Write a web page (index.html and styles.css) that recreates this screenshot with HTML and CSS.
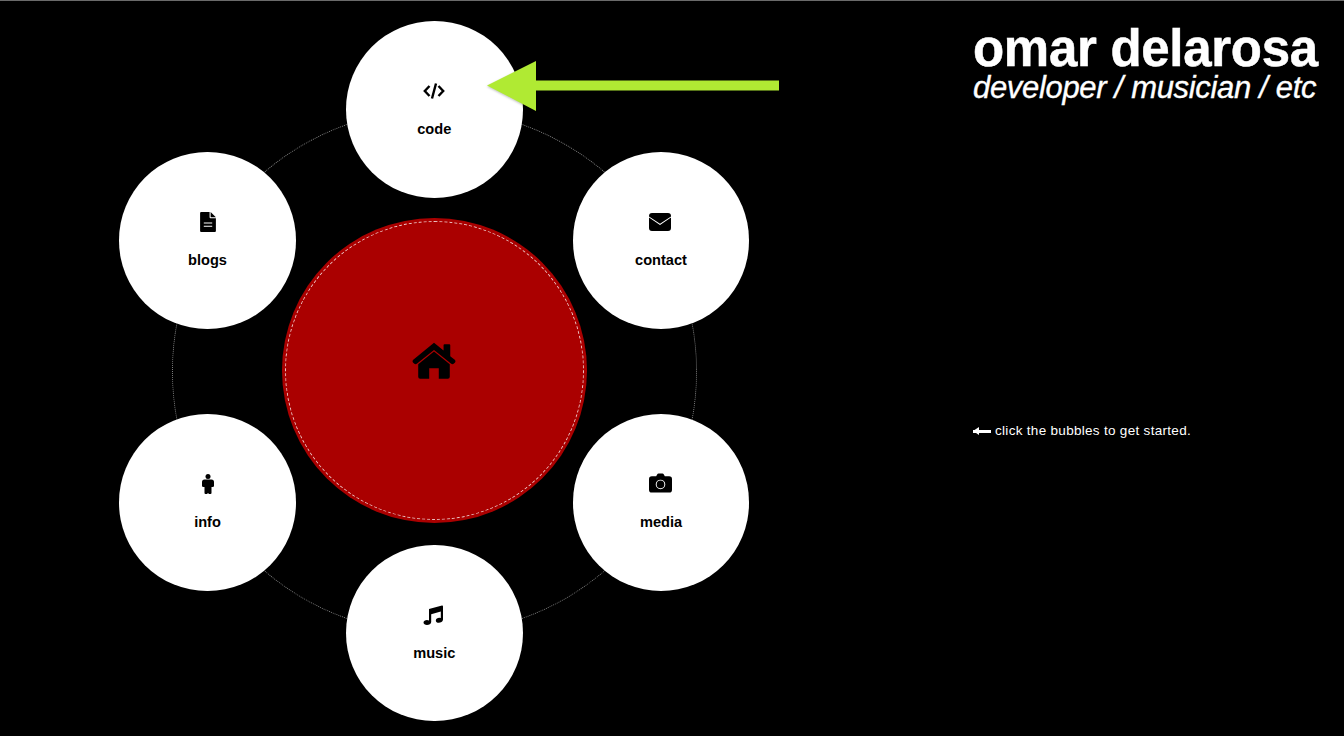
FILE: index.html
```html
<!DOCTYPE html>
<html lang="en">
<head>
<meta charset="utf-8">
<title>omar delarosa</title>
<link rel="stylesheet" href="styles.css">
</head>
<body>
<main class="page">
  <section class="stage">
    <div class="ring"></div>
    <div class="hub">
      <svg class="icon-home" viewBox="0 0 46 38"><path d="M23 .5 L33 8.500 V3 Q33 2 34 2 H39 Q40 2 40 3 V14.500 L45 18.500 Q46 20 45 21 L43.500 22.500 Q42.500 23.500 41 22.500 L23 8 L5 22.500 Q3.500 23.500 2.500 22.500 L1 21 Q0 20 1 18.500 Z M23 9.500 L39.500 23 V36 Q39.500 38 37.500 38 H28 V27 H18 V38 H8.500 Q6.500 38 6.500 36 V23 Z"/></svg>
    </div>
    <a class="bubble code">
      <svg class="icon" viewBox="0 0 22 20"><path class="stroked" d="M6.500 5 L1.800 10 L6.500 15 M15.500 5 L20.200 10 L15.500 15 M13 2.500 L9 17.500"/></svg>
      <span>code</span>
    </a>
    <a class="bubble contact">
      <svg class="icon icon-mail" viewBox="0 0 22 18"><path d="M3 0 H19 Q22 0 22 3 V3.400 L11 10.800 L0 3.400 V3 Q0 0 3 0 Z M0 4.600 L11 12 L22 4.600 V15 Q22 18 19 18 H3 Q0 18 0 15 Z"/></svg>
      <span>contact</span>
    </a>
    <a class="bubble media">
      <svg class="icon icon-camera" viewBox="0 0 24 20"><path fill-rule="evenodd" d="M7.500 3 L8.500 1 Q9 0 10 0 H14 Q15 0 15.500 1 L16.500 3 H21 Q24 3 24 6 V17 Q24 20 21 20 H3 Q0 20 0 17 V6 Q0 3 3 3 Z M12 6.500 A5 5 0 1 0 12 16.500 A5 5 0 1 0 12 6.500 Z M12 7.500 A4 4 0 1 1 12 15.500 A4 4 0 1 1 12 7.500 Z"/></svg>
      <span>media</span>
    </a>
    <a class="bubble music">
      <svg class="icon icon-music" viewBox="0 0 20 20"><path d="M6 4 L19 .5 Q20 .3 20 1.500 V14.500 C20 16.800 17.500 17.800 15.800 17.800 C14 17.800 12.800 16.800 12.800 15.400 C12.800 13.800 14.600 12.800 16.300 12.800 Q17.200 12.800 17.800 13.100 V6.500 L8.200 9.200 V17 C8.200 19 6 20 4 20 C2 20 .5 19 .5 17.500 C.5 16 2.200 15 4 15 Q5.200 15 6 15.400 Z"/></svg>
      <span>music</span>
    </a>
    <a class="bubble info">
      <svg class="icon icon-person" viewBox="0 0 14 20"><circle cx="7" cy="2.500" r="2.500"/><path d="M3.500 5.500 H10.500 Q13 5.500 13 8 V12 Q13 13 11.500 13 H10.500 V19 Q10.500 20 9.500 20 H8 L7 19 L6 20 H4.500 Q3.500 20 3.500 19 V13 H2.500 Q1 13 1 12 V8 Q1 5.500 3.500 5.500 Z"/></svg>
      <span>info</span>
    </a>
    <a class="bubble blogs">
      <svg class="icon icon-file" viewBox="0 0 15 19"><path fill-rule="evenodd" d="M1 0 H9 V5 Q9 6 10 6 H15 V18 Q15 19 14 19 H1 Q0 19 0 18 V1 Q0 0 1 0 Z M10 0 L15 5 H10 Z M3.500 10 V11 H11.500 V10 Z M3.500 13 V14 H11.500 V13 Z"/></svg>
      <span>blogs</span>
    </a>
    <svg class="arrow" viewBox="0 0 294 52"><path d="M0 25.500 L49 1 V20.500 H292 V30.500 H49 V51 Z"/></svg>
  </section>
  <aside class="intro">
    <header class="brand">
      <h1>omar delarosa</h1>
      <p>developer / musician / etc</p>
    </header>
    <p class="hint"><span class="hint-arrow"></span>click the bubbles to get started.</p>
  </aside>
</main>
</body>
</html>
```
FILE: styles.css
```css
* { box-sizing: border-box; }

html, body {
  margin: 0;
  height: 100%;
  background: #000;
  overflow: hidden;
}

body {
  border-top: 1px solid #6a6a6a;
  color: #fff;
  font-family: "Liberation Sans", Arial, sans-serif;
}

.page {
  display: flex;
  height: 735px;
}

.stage {
  position: relative;
  flex: 0 0 973px;
}

.ring {
  position: absolute;
  left: 172px;
  top: 108px;
  width: 525px;
  height: 525px;
  border: 1px dotted #808080;
  border-radius: 50%;
}

.hub {
  position: absolute;
  left: 282px;
  top: 217px;
  width: 305px;
  height: 305px;
  border-radius: 50%;
  background: #aa0000;
  display: flex;
  align-items: center;
  justify-content: center;
}

.hub::before {
  content: "";
  position: absolute;
  inset: 3px;
  border: 1px dashed #ecc6c6;
  border-radius: 50%;
}

.icon-home {
  width: 44px;
  height: 37px;
  margin: -21px 1px 0 0;
  fill: #000;
}

.bubble {
  position: absolute;
  width: 176.500px;
  height: 176.500px;
  border-radius: 50%;
  background: #fff;
  color: #000;
  display: flex;
  flex-direction: column;
  align-items: center;
  padding-top: 60px;
  font-size: 14.600px;
  font-weight: 700;
  line-height: 16px;
}

.bubble span { margin-top: 20px; }

.icon {
  width: 22px;
  height: 20px;
  fill: #000;
}

.icon-mail { margin-left: -2px; }
.icon-camera { width: 23px; height: 20px; margin: -1px 0 1px -2px; }
.icon-music { width: 20px; margin-left: -2px; }
.icon-person { width: 14px; }
.icon-file { width: 16px; }

.stroked {
  fill: none;
  stroke: #000;
  stroke-width: 2.400;
}

.code    { left: 346px; top: 20px; }
.contact { left: 572.750px; top: 151px; }
.media   { left: 572.750px; top: 413px; }
.music   { left: 346px; top: 543.600px; }
.info    { left: 119.250px; top: 413px; }
.blogs   { left: 119.250px; top: 151px; }

.arrow {
  position: absolute;
  left: 487px;
  top: 59px;
  width: 294px;
  height: 52px;
  fill: #b0ea33;
  filter: drop-shadow(0 1px 1px rgba(0, 0, 0, .25));
}

.intro {
  flex: 1;
  display: flex;
  flex-direction: column;
}

.brand h1 {
  margin: 23px 0 0;
  font-size: 51px;
  line-height: 50px;
  font-weight: 700;
  letter-spacing: -.3px;
  -webkit-text-stroke: .5px #fff;
  white-space: nowrap;
}

.brand p {
  margin: 0;
  font-size: 31px;
  line-height: 28px;
  font-style: italic;
  letter-spacing: -.32px;
  -webkit-text-stroke: .35px #fff;
  white-space: nowrap;
}

.hint {
  margin: 320px 0 0;
  font-size: 13.500px;
  line-height: 18px;
  letter-spacing: .3px;
  display: flex;
  align-items: center;
  white-space: nowrap;
}

.hint-arrow {
  position: relative;
  width: 18px;
  height: 3px;
  margin-right: 4px;
  background: #fff;
}

.hint-arrow::before {
  content: "";
  position: absolute;
  left: 0;
  top: -3px;
  border-style: solid;
  border-width: 4.500px 6px 4.500px 0;
  border-color: transparent #fff transparent transparent;
}
```
